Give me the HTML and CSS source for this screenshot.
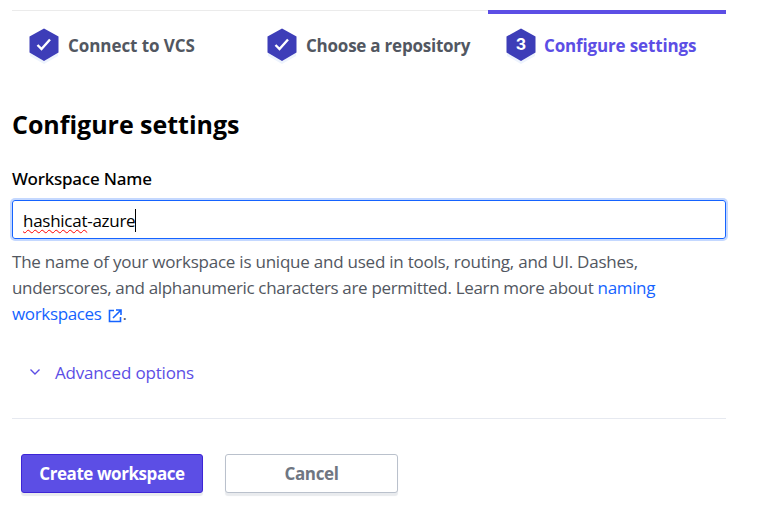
FILE: index.html
```html
<!DOCTYPE html>
<html lang="en"><head><meta charset="utf-8"><title>Configure settings</title><link rel="stylesheet" href="styles.css"></head>
<body><main class="page">
<nav class="steps">
<div class="step"><svg class="hex" viewBox="0 0 32 37"><path class="shade" d="M2 13h28v15L16 36 2 28Z"/><path d="M16 0.5 30.5 8.5v16L16 33 1.5 24.5V8.5Z"/><path class="check" d="m9.5 17 4 4 8.5-9.5"/></svg><span class="t1">Connect to VCS</span></div>
<div class="step"><svg class="hex" viewBox="0 0 32 37"><path class="shade" d="M2 13h28v15L16 36 2 28Z"/><path d="M16 0.5 30.5 8.5v16L16 33 1.5 24.5V8.5Z"/><path class="check" d="m9.5 17 4 4 8.5-9.5"/></svg><span class="t2">Choose a repository</span></div>
<div class="step active"><svg class="hex" viewBox="0 0 32 37"><path class="shade" d="M2 13h28v15L16 36 2 28Z"/><path d="M16 0.5 30.5 8.5v16L16 33 1.5 24.5V8.5Z"/><text x="16" y="22.3">3</text></svg><span class="t3">Configure settings</span></div>
</nav>
<h1><span>Configure settings</span></h1>
<label class="label" for="name"><span>Workspace Name</span></label>
<div class="field" id="name"><span class="typo">hashicat</span><span>-azure</span><i class="caret"></i></div>
<p class="help"><span class="l1">The name of your workspace is unique and used in tools, routing, and UI. Dashes,</span><br><span class="l2">underscores, and alphanumeric characters are permitted. Learn more about <a>naming</a></span><br><span class="l3"><a>workspaces <svg class="ext" viewBox="0 0 16 16"><path d="M7 2.5H2.5v11h11V9M9 2h5v5M14 2 6 10"/></svg></a>.</span></p>
<div class="advanced"><svg viewBox="0 0 12 8"><path d="m1.5 1.5 4.5 4.5 4.5-4.5"/></svg><span>Advanced options</span></div>
<div class="actions"><button class="primary">Create workspace</button><button>Cancel</button></div>
</main></body></html>
```
FILE: styles.css
```css
*{box-sizing:border-box}
body{margin:0;background:#fff;font-family:"Open Sans","Noto Sans",sans-serif;font-size:17px;color:#000}
.page{width:714px;margin-left:12px;padding-top:10px}
.steps{display:grid;grid-template-columns:238px 238px 238px}
.step{height:52px;border-top:1px solid #ebebeb;display:flex;padding:17px 0 0 16px;align-items:flex-start;font-weight:700;color:#525761;line-height:36px}
.hex{width:32px;height:37px;margin-right:8px;flex:none;fill:#3d3db8}
.hex .shade{fill:#edf3fd}
.hex .check{fill:none;stroke:#fff;stroke-width:2.4}
.hex text{fill:#fff;font-family:Inter,sans-serif;font-size:16px;font-weight:700;text-anchor:middle}
.step.active{border-top:4px solid #5c4ee5;padding:14px 0 0 17px;color:#5c4ee5}
.t1{letter-spacing:-.07px}
.t2{letter-spacing:-.23px}
.t3{margin-left:-1px;letter-spacing:-.15px}
h1{font-size:25px;line-height:34px;margin:45px 0 0;font-weight:700;letter-spacing:-.02px}
.label{display:block;margin-top:25px;line-height:26px;font-family:"Noto Sans",sans-serif;font-weight:500;letter-spacing:-.2px}
.field{height:39px;margin-top:8px;border:1px solid #1563ff;border-radius:3px;box-shadow:0 0 0 2px #c4d8ff;display:flex;align-items:center;padding:2px 0 0 10px;letter-spacing:-.27px}
.typo{text-decoration:underline wavy #f00 1px;text-underline-offset:2px}
.caret{width:1px;height:23px;background:#000}
.help{margin:10px 0 0;line-height:26px;color:#525761;white-space:nowrap;letter-spacing:-.23px}
.l2{letter-spacing:-.33px}
.l3{letter-spacing:-.35px}
.help a{color:#1563ff}
.ext{width:16px;height:16px;margin-left:1px;fill:none;stroke:#1563ff;stroke-width:1.6;vertical-align:-4px}
.advanced{display:flex;align-items:center;margin:33px 0 32px;padding-left:17px;color:#5c4ee5;line-height:26px;letter-spacing:-.18px}
.advanced svg{width:12px;height:8px;fill:none;stroke:#5c4ee5;stroke-width:1.4;margin:-3px 14px 0 0}
.actions{border-top:1px solid #e6e9f0;display:flex;gap:22px;padding:35px 9px}
button{height:39px;width:173px;border:1px solid #bac1cc;border-radius:3px;background:#fff;box-shadow:0 3px 1px #e9ebee;font:700 17px "Open Sans","Noto Sans",sans-serif;letter-spacing:-.35px;color:#6f7682}
.primary{width:182px;background:#5c4ee5;color:#fff;border-color:#3d25d6;letter-spacing:-.43px}
```
